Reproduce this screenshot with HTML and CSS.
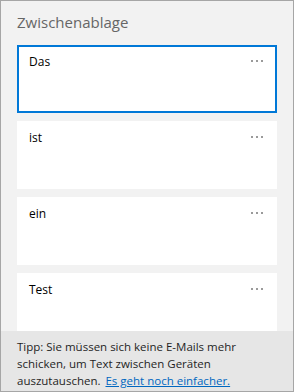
FILE: index.html
```html
<!DOCTYPE html>
<html lang="de">
<head>
<meta charset="utf-8">
<link rel="stylesheet" href="styles.css">
</head>
<body>
<div class="window">
  <div class="title">Zwischenablage</div>
  <div class="list">
    <div class="card selected"><span class="text">Das</span><span class="more"><i></i><i></i><i></i></span></div>
    <div class="card"><span class="text">ist</span><span class="more"><i></i><i></i><i></i></span></div>
    <div class="card"><span class="text">ein</span><span class="more"><i></i><i></i><i></i></span></div>
    <div class="card"><span class="text">Test</span><span class="more"><i></i><i></i><i></i></span></div>
  </div>
  <p class="footer"><span>Tipp: Sie müssen sich keine E-Mails mehr schicken, um Text zwischen Geräten auszutauschen.</span> <a class="link" href="#">Es geht noch einfacher.</a></p>
</div>
</body>
</html>
```
FILE: styles.css
```css
html, body {
  margin: 0;
  padding: 0;
}
body {
  width: 294px;
  height: 392px;
  font-family: "Open Sans", "Noto Sans", sans-serif;
}
.window {
  box-sizing: border-box;
  width: 294px;
  height: 392px;
  border: 1px solid #a6a6a6;
  background: #f2f2f2;
  display: flex;
  flex-direction: column;
  overflow: hidden;
}
.title {
  font-size: 15px;
  line-height: 20px;
  color: #666;
  padding: 11px 16px 0 16px;
  height: 34px;
  box-sizing: border-box;
}
.list {
  flex: 1;
  overflow: hidden;
  padding: 10px 16px 0 16px;
  display: flex;
  flex-direction: column;
  gap: 8px;
}
.card {
  flex: none;
  box-sizing: border-box;
  height: 68px;
  background: #fff;
  display: flex;
  justify-content: space-between;
  align-items: flex-start;
  padding: 9px 14px 0 12px;
}
.card.selected {
  border: 2px solid #0078d7;
  padding: 7px 12px 0 10px;
}
.text {
  font-size: 12px;
  line-height: 16px;
  color: #000;
}
.more {
  display: flex;
  gap: 3px;
  margin-top: 6px;
}
.more i {
  display: block;
  width: 2px;
  height: 2px;
  background: #9a9a9a;
}
.footer {
  margin: 0;
  flex: none;
  height: 60px;
  box-sizing: border-box;
  background: #e6e6e6;
  padding: 7px 16px 0 16px;
  font-size: 11.5px;
  line-height: 17px;
  color: #1f1f1f;
}
.link {
  color: #0067c0;
  text-decoration: underline;
  margin-left: 2px;
}
```
